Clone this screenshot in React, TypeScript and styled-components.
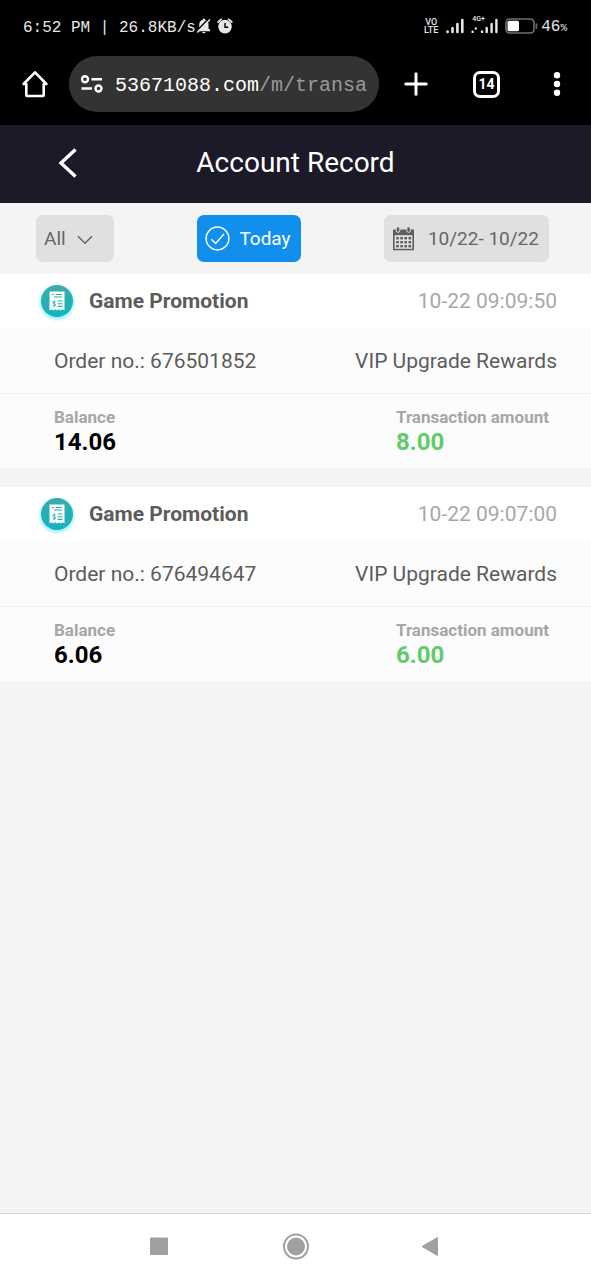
import React from "react";
import styled, { createGlobalStyle } from "styled-components";

const GlobalStyle = createGlobalStyle`
  *, *::before, *::after { box-sizing: border-box; }
  body { margin: 0; background: #f4f4f4; font-family: Roboto, "Liberation Sans", sans-serif; }
  button, select { font: inherit; border: 0; margin: 0; padding: 0; background: none; color: inherit; }
  h1, h2, p, dl, dt, dd { margin: 0; }
  svg { display: block; flex: none; }
`;

const Page = styled.div`
  display: flex;
  flex-direction: column;
  min-height: 100vh;
`;

const StatusBar = styled.div`
  display: flex;
  align-items: center;
  justify-content: space-between;
  height: 56px;
  padding: 0 24px 4px 23px;
  background: #000;
  color: #e6e6e6;
  font: 16px/20px "Liberation Mono", monospace;
`;

const StatusGroup = styled.div<{ $gap: number }>`
  display: flex;
  align-items: center;
  gap: ${(p) => p.$gap}px;
`;

const StatusText = styled.span`
  padding-top: 3px;
  white-space: pre;
`;

const Volte = styled.span`
  width: 16px;
  font: 500 9px/8px Roboto, sans-serif;
  text-align: center;
`;

const Signal = styled.span`
  position: relative;
`;

const NetworkType = styled.span`
  position: absolute;
  top: -3px;
  left: 1px;
  font: 500 7px/8px Roboto, sans-serif;
`;

const Percent = styled.span`
  font-size: 11px;
`;

const BrowserBar = styled.div`
  display: flex;
  align-items: center;
  height: 69px;
  padding: 0 22px 13px;
  background: #000;
  color: #fff;
`;

const AddressBar = styled.button`
  display: flex;
  flex: 1;
  align-items: center;
  gap: 12px;
  min-width: 0;
  height: 56px;
  margin: 0 25px 0 21px;
  padding: 0 10px 0 12px;
  border-radius: 28px;
  background: #333;
  color: #fff;
  font: 20px/28px "Liberation Mono", monospace;
`;

const Url = styled.span`
  flex: 1;
  overflow: hidden;
  padding-top: 4px;
  text-align: left;
  white-space: nowrap;
`;

const UrlPath = styled.span`
  color: #9a9a9a;
`;

const BrowserActions = styled.div`
  display: flex;
  align-items: center;
  justify-content: space-between;
  width: 165px;
`;

const TabCount = styled.button`
  display: grid;
  place-items: center;
  width: 27px;
  height: 27px;
  border: 3px solid #fff;
  border-radius: 7px;
  font-size: 14px;
  font-weight: 700;
  line-height: 16px;
`;

const Header = styled.header`
  display: grid;
  grid-template-columns: 1fr auto 1fr;
  align-items: center;
  height: 78px;
  padding: 0 56px 2px;
  background: #1c1a29;
  color: #fff;
`;

const Title = styled.h1`
  font-size: 28px;
  font-weight: 400;
  line-height: 36px;
`;

const BackButton = styled.button`
  justify-self: start;
`;

const Filters = styled.div`
  display: flex;
  justify-content: space-between;
  padding: 12px 42px 12px 36px;
`;

const FilterButton = styled.button<{ $active?: boolean }>`
  display: flex;
  align-items: center;
  gap: ${(p) => (p.$active ? 9 : 13)}px;
  height: 47px;
  padding: 0 10px 0 8px;
  border-radius: 7px;
  background: ${(p) => (p.$active ? "#128eec" : "#e0e0e0")};
  color: ${(p) => (p.$active ? "#fff" : "#666")};
  font-size: 19px;
`;

const TypeFilter = styled.label`
  display: grid;
  align-items: center;
  width: 78px;
  height: 47px;
  border-radius: 7px;
  background: #e0e0e0;
  color: #666;
  > * { grid-area: 1 / 1; }
  > svg { justify-self: end; margin: 2px 21px 0 0; pointer-events: none; }
`;

const TypeSelect = styled.select`
  appearance: none;
  width: 100%;
  height: 100%;
  padding: 0 36px 0 8px;
  font-size: 19px;
`;

const Records = styled.main`
  display: flex;
  flex: 1;
  flex-direction: column;
  gap: 19px;
`;

const Card = styled.article`
  background: #fcfcfc;
`;

const CardHead = styled.div`
  display: flex;
  align-items: center;
  height: 54px;
  padding: 0 34px 0 36px;
  background: #fff;
`;

const CardTitle = styled.h2`
  flex: 1;
  margin-left: 11px;
  color: #5c5c5c;
  font-size: 21px;
  font-weight: 700;
`;

const Timestamp = styled.time`
  color: #a8a8a8;
  font-size: 21px;
`;

const OrderRow = styled.div`
  display: flex;
  align-items: center;
  justify-content: space-between;
  height: 66px;
  padding: 0 34px 0 54px;
  border-bottom: 1px solid #eee;
  color: #5c5c5c;
  font-size: 21px;
`;

const Amounts = styled.dl`
  display: flex;
  justify-content: space-between;
  height: 74px;
  padding: 12px 42px 0 54px;
`;

const AmountLabel = styled.dt`
  color: #a6a6a6;
  font-size: 17px;
  font-weight: 700;
  line-height: 22px;
`;

const AmountValue = styled.dd<{ $credit?: boolean }>`
  color: ${(p) => (p.$credit ? "#5fcc6b" : "#000")};
  font-size: 24px;
  font-weight: 700;
  line-height: 28px;
`;

const SystemNav = styled.nav`
  display: flex;
  align-items: center;
  justify-content: center;
  gap: 108px;
  height: 67px;
  border-top: 1px solid #d8d8d8;
  background: #fff;
`;

const BellOffIcon = () => (
  <svg width="15" height="16" viewBox="0 0 15 16" fill="#e6e6e6">
    <path d="M8 .6a1.300 1.300 0 0 0-1.300 1.200C4.300 2.500 3.200 4.400 3.200 6.800v3.600L1.200 12v1.200h13V12l-1.700-1.600V6.800c0-2.400-1.100-4.300-3.200-5A1.300 1.300 0 0 0 8 .6zM6 14a1.900 1.900 0 0 0 3.600 0z" />
    <path d="M.8 13 12.600.6" stroke="#000" strokeWidth="1.400" />
    <path d="M1.300 14.400 14 1.400" stroke="#e6e6e6" strokeWidth="1.500" />
  </svg>
);

const AlarmIcon = () => (
  <svg width="16" height="16" viewBox="0 0 16 16">
    <circle cx="8" cy="8.600" r="6.800" fill="#e6e6e6" />
    <path d="M1.200 4 4.200 1.400M14.800 4 11.800 1.400" stroke="#e6e6e6" strokeWidth="1.800" strokeLinecap="round" />
    <path d="M8 5v4.200h3.200" fill="none" stroke="#000" strokeWidth="1.400" />
  </svg>
);

const SignalIcon = () => (
  <svg width="18" height="16" viewBox="0 0 18 16" stroke="#e6e6e6" strokeWidth="2.600" strokeLinecap="round">
    <path d="M1.600 13.500v.4M6.500 10v4M11.400 6v8M16.300 2v12" />
  </svg>
);

const DataSignalIcon = () => (
  <svg width="27" height="16" viewBox="0 0 27 16" stroke="#e6e6e6" strokeWidth="2.400" strokeLinecap="round">
    <path d="M1.600 13.700v.2M4.800 10.400v.2M11 13.500v.4M15.700 10v4M20.600 6v8M25.400 2v12" />
  </svg>
);

const BatteryIcon = () => (
  <svg width="33" height="16" viewBox="0 0 33 16">
    <rect x="1" y="1" width="28" height="14" rx="3.500" fill="none" stroke="#707070" strokeWidth="1.600" />
    <rect x="2.500" y="2.800" width="11.500" height="10.500" rx="1.500" fill="#fff" />
    <path d="M31.400 6v4" stroke="#707070" strokeWidth="1.600" strokeLinecap="round" />
  </svg>
);

const HomeIcon = () => (
  <svg width="26" height="28" viewBox="0 0 26 28" fill="none" stroke="#fff" strokeWidth="2.600" strokeLinejoin="round" strokeLinecap="round">
    <path d="M4.300 14H1.600L13 2.300 24.400 14h-2.700v11.200q0 .8-.8.8H5.100q-.8 0-.8-.8z" />
  </svg>
);

const SiteInfoIcon = () => (
  <svg width="22" height="20" viewBox="0 0 22 20" fill="none" stroke="#fff" strokeWidth="2.400">
    <circle cx="4" cy="5.200" r="3" />
    <circle cx="17.500" cy="14.500" r="3" />
    <path d="M10.500 5.200H21M.500 14.500H11" />
  </svg>
);

const PlusIcon = () => (
  <svg width="24" height="24" viewBox="0 0 24 24" stroke="#fff" strokeWidth="3" strokeLinecap="round">
    <path d="M12 1.800v20.400M1.800 12h20.400" />
  </svg>
);

const MoreIcon = () => (
  <svg width="24" height="24" viewBox="0 0 24 24" fill="#fff">
    <circle cx="12" cy="3.300" r="3.200" />
    <circle cx="12" cy="12" r="3.200" />
    <circle cx="12" cy="20.700" r="3.200" />
  </svg>
);

const BackIcon = () => (
  <svg width="24" height="32" viewBox="0 0 24 32" fill="none" stroke="#fff" strokeWidth="3.400">
    <path d="M19.500 2.500 5 16l14.500 13.500" />
  </svg>
);

const ChevronIcon = () => (
  <svg width="16" height="10" viewBox="0 0 16 10" fill="none" stroke="#666" strokeWidth="1.600">
    <path d="m1 1.200 7 7 7-7" />
  </svg>
);

const CheckIcon = () => (
  <svg width="25" height="25" viewBox="0 0 25 25" fill="none" stroke="#fff" strokeWidth="1.500">
    <circle cx="12.500" cy="12.500" r="11.400" />
    <path d="m6.300 13.200 4.400 4.300 8.300-9.500" />
  </svg>
);

const cellRows = [11, 15, 19];
const cellColumns = [4.2, 8.3, 12.4, 16.5];

const CalendarIcon = () => (
  <svg width="23" height="25" viewBox="0 0 23 25">
    <path d="M1 3.500h21v20.800H1z" fill="#5e5e5e" />
    <path d="M2.600 9.200h17.800v13.600H2.600z" fill="#e0e0e0" />
    {cellRows.map((y) =>
      cellColumns.map((x) => (
        <rect key={`${x}-${y}`} x={x} y={y} width="2.600" height="2.400" fill="#5e5e5e" />
      ))
    )}
    <rect x="4.200" y=".8" width="3.600" height="5.600" rx="1.800" fill="#5e5e5e" stroke="#e0e0e0" />
    <rect x="14.800" y=".8" width="3.600" height="5.600" rx="1.800" fill="#5e5e5e" stroke="#e0e0e0" />
  </svg>
);

const ReceiptIcon = () => (
  <svg width="42" height="42" viewBox="0 0 42 42">
    <defs>
      <linearGradient id="receipt-disc" x1="0" y1="0" x2="0" y2="1">
        <stop offset="0" stopColor="#3cabaa" />
        <stop offset="1" stopColor="#12b4be" />
      </linearGradient>
      <radialGradient id="receipt-glow">
        <stop offset=".74" stopColor="#62e8fa" stopOpacity=".65" />
        <stop offset="1" stopColor="#62e8fa" stopOpacity="0" />
      </radialGradient>
    </defs>
    <circle cx="21" cy="22.500" r="19.500" fill="url(#receipt-glow)" />
    <circle cx="21" cy="21" r="16" fill="url(#receipt-disc)" />
    <path d="M13.500 11.500h15v19l-1.900-1.300-1.900 1.300-1.850-1.300L21 30.500l-1.850-1.300-1.850 1.300-1.900-1.300-1.900 1.300z" fill="#fff" />
    <path d="M16 14.500h2M19.500 14.500H26M18 17h8M21.500 21h5M21.500 23.700h5M21.500 26.400h5" stroke="#27adb2" strokeWidth="1.100" />
    <path d="M19.700 22c-1-.9-3-.6-3 .6s3 .9 3 2.200-2 1.500-3 .6M18.200 20.700v6.400" fill="none" stroke="#27adb2" strokeWidth=".9" />
  </svg>
);

const RecentsIcon = () => (
  <svg width="28" height="28" viewBox="0 0 28 28" fill="#a0a0a0">
    <rect x="4" y="4.500" width="18" height="17.500" rx="1" />
  </svg>
);

const NavHomeIcon = () => (
  <svg width="28" height="28" viewBox="0 0 28 28" fill="#a0a0a0">
    <circle cx="14" cy="13.500" r="12" fill="none" stroke="#a0a0a0" strokeWidth="2" />
    <circle cx="14" cy="13.500" r="9" />
  </svg>
);

const NavBackIcon = () => (
  <svg width="28" height="28" viewBox="0 0 28 28" fill="#a0a0a0" stroke="#a0a0a0" strokeLinejoin="round">
    <path d="M19.500 4.500v18L4 13.500z" />
  </svg>
);

interface TransactionRecord {
  order: string;
  time: string;
  balance: string;
  amount: string;
}

const records: TransactionRecord[] = [
  { order: "676501852", time: "10-22 09:09:50", balance: "14.06", amount: "8.00" },
  { order: "676494647", time: "10-22 09:07:00", balance: "6.06", amount: "6.00" },
];

const RecordCard = ({ record }: { record: TransactionRecord }) => (
  <Card>
    <CardHead>
      <ReceiptIcon />
      <CardTitle>Game Promotion</CardTitle>
      <Timestamp>{record.time}</Timestamp>
    </CardHead>
    <OrderRow>
      <p>Order no.: {record.order}</p>
      <p>VIP Upgrade Rewards</p>
    </OrderRow>
    <Amounts>
      <div>
        <AmountLabel>Balance</AmountLabel>
        <AmountValue>{record.balance}</AmountValue>
      </div>
      <div>
        <AmountLabel>Transaction amount</AmountLabel>
        <AmountValue $credit>{record.amount}</AmountValue>
      </div>
    </Amounts>
  </Card>
);

export default function App() {
  return (
    <Page>
      <GlobalStyle />
      <StatusBar>
        <StatusGroup $gap={6}>
          <StatusGroup $gap={0}>
            <StatusText>6:52 PM | 26.8KB/s</StatusText>
            <BellOffIcon />
          </StatusGroup>
          <AlarmIcon />
        </StatusGroup>
        <StatusGroup $gap={7}>
          <Volte>VO LTE</Volte>
          <SignalIcon />
          <Signal>
            <DataSignalIcon />
            <NetworkType>4G+</NetworkType>
          </Signal>
          <StatusGroup $gap={3}>
            <BatteryIcon />
            <StatusText>46<Percent>%</Percent></StatusText>
          </StatusGroup>
        </StatusGroup>
      </StatusBar>
      <BrowserBar>
        <button aria-label="Home"><HomeIcon /></button>
        <AddressBar>
          <SiteInfoIcon />
          <Url>53671088.com<UrlPath>/m/transa</UrlPath></Url>
        </AddressBar>
        <BrowserActions>
          <button aria-label="New tab"><PlusIcon /></button>
          <TabCount>14</TabCount>
          <button aria-label="More options"><MoreIcon /></button>
        </BrowserActions>
      </BrowserBar>
      <Header>
        <BackButton aria-label="Back"><BackIcon /></BackButton>
        <Title>Account Record</Title>
      </Header>
      <Filters>
        <TypeFilter>
          <TypeSelect aria-label="Record type">
            <option>All</option>
          </TypeSelect>
          <ChevronIcon />
        </TypeFilter>
        <FilterButton $active>
          <CheckIcon />
          Today
        </FilterButton>
        <FilterButton>
          <CalendarIcon />
          10/22- 10/22
        </FilterButton>
      </Filters>
      <Records>
        {records.map((record) => (
          <RecordCard key={record.order} record={record} />
        ))}
      </Records>
      <SystemNav>
        <button aria-label="Recent apps"><RecentsIcon /></button>
        <button aria-label="Home screen"><NavHomeIcon /></button>
        <button aria-label="Go back"><NavBackIcon /></button>
      </SystemNav>
    </Page>
  );
}
